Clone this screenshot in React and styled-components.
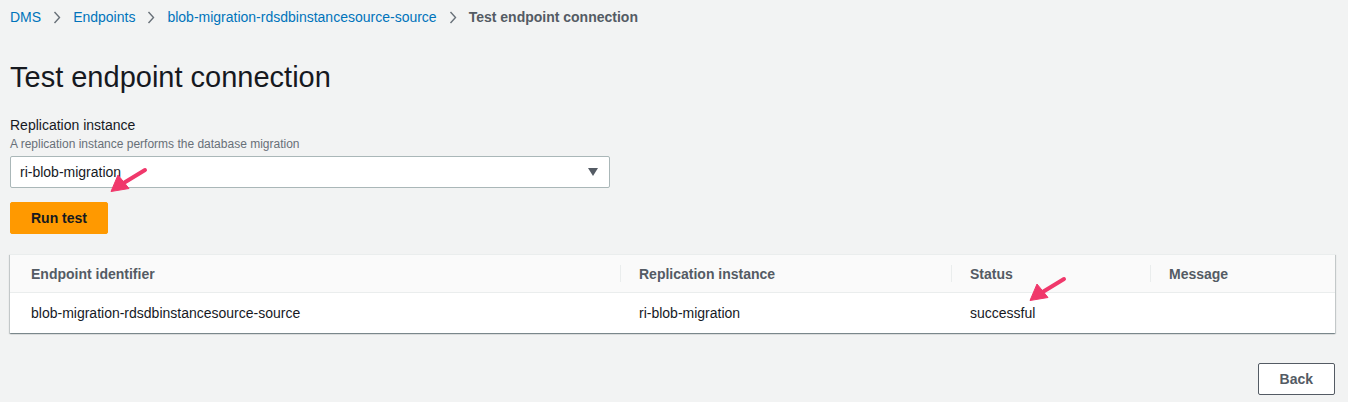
import React from "react";
import styled, { createGlobalStyle } from "styled-components";

const Global = createGlobalStyle`
  html, body { margin: 0; padding: 0; background: #f2f3f3; }
  body { font-family: "Liberation Sans", Arial, sans-serif; color: #16191f; }
`;

const Page = styled.div`
  position: relative;
  width: 1348px;
  height: 402px;
  box-sizing: border-box;
  padding: 7px 13px 0 10px;
  display: flex;
  flex-direction: column;
  overflow: hidden;
`;

const Crumbs = styled.nav`
  display: flex;
  align-items: center;
  height: 20px;
  font-size: 14px;
  line-height: 20px;
`;

const CrumbLink = styled.a`
  color: #0073bb;
  text-decoration: none;
`;

const CrumbCurrent = styled.span`
  color: #545b64;
  font-weight: bold;
`;

const Sep = styled.span`
  display: inline-flex;
  width: 32px;
  justify-content: center;
  align-items: center;
`;

const Title = styled.h1`
  margin: 32px 0 0;
  font-size: 29px;
  line-height: 36px;
  font-weight: normal;
  color: #16191f;
`;

const Label = styled.div`
  margin-top: 20px;
  font-size: 14px;
  line-height: 20px;
  color: #16191f;
`;

const Description = styled.div`
  margin-top: 1px;
  font-size: 12px;
  line-height: 16px;
  color: #687078;
`;

const Select = styled.div`
  margin-top: 4px;
  width: 600px;
  height: 32px;
  box-sizing: border-box;
  border: 1px solid #aab7b8;
  border-radius: 2px;
  background: #fff;
  display: flex;
  align-items: center;
  justify-content: space-between;
  padding: 0 9px 0 9px;
  font-size: 14px;
  color: #16191f;
`;

const Caret = styled.span`
  width: 0;
  height: 0;
  border-left: 5px solid transparent;
  border-right: 5px solid transparent;
  border-top: 8px solid #545b64;
  margin-right: 2px;
`;

const Button = styled.button`
  margin-top: ${(p) => p.$mt || 0}px;
  align-self: ${(p) => (p.$right ? "flex-end" : "flex-start")};
  height: 32px;
  box-sizing: border-box;
  padding: 0 ${(p) => p.$px || 20}px;
  font-family: inherit;
  font-size: 14px;
  font-weight: bold;
  border-radius: 2px;
  cursor: pointer;
  background: ${(p) => (p.$primary ? "#ff9900" : "#ffffff")};
  border: 1px solid ${(p) => (p.$primary ? "#ff9900" : "#545b64")};
  color: ${(p) => (p.$primary ? "#16191f" : "#545b64")};
`;

const Table = styled.div`
  margin-top: 20px;
  background: #fff;
  box-shadow: 0 1px 1px 0 rgba(0, 28, 36, 0.3), 1px 1px 1px 0 rgba(0, 28, 36, 0.15),
    -1px 1px 1px 0 rgba(0, 28, 36, 0.15);
  border-top: 1px solid #eaeded;
`;

const Row = styled.div`
  display: grid;
  grid-template-columns: 610px 331px 199px 1fr;
  height: ${(p) => (p.$head ? 37 : 40)}px;
  background: ${(p) => (p.$head ? "#fafafa" : "#fff")};
  border-bottom: ${(p) => (p.$head ? "1px solid #eaeded" : "none")};
`;

const Cell = styled.div`
  position: relative;
  display: flex;
  align-items: center;
  padding-left: ${(p) => (p.$first ? 21 : 19)}px;
  font-size: 14px;
  font-weight: ${(p) => (p.$head ? "bold" : "normal")};
  color: ${(p) => (p.$head ? "#545b64" : "#16191f")};
  ${(p) =>
    p.$head && !p.$first
      ? `&::before { content: ""; position: absolute; left: 0; top: 10px; bottom: 10px; width: 1px; background: #eaeded; }`
      : ""}
`;

const ArrowSvg = styled.svg`
  position: absolute;
  left: ${(p) => p.$x}px;
  top: ${(p) => p.$y}px;
  overflow: visible;
`;

function Chevron() {
  return (
    <svg width="8" height="13" viewBox="0 0 8 13">
      <polyline points="1.5,1 6.5,6.5 1.5,12" fill="none" stroke="#687078" strokeWidth="1.4" />
    </svg>
  );
}

function Arrow({ x, y }) {
  // tail at top-right, tip at bottom-left
  return (
    <ArrowSvg $x={x} $y={y} width="36" height="24" viewBox="0 0 36 24">
      <line x1="34" y1="2" x2="11" y2="16" stroke="#f0386b" strokeWidth="4" strokeLinecap="round" />
      <polygon points="0,23.5 7,7 18,20.5" fill="#f0386b" strokeLinejoin="round" stroke="#f0386b" strokeWidth="1" />
    </ArrowSvg>
  );
}

export default function App() {
  return (
    <>
      <Global />
      <Page>
        <Crumbs>
          <CrumbLink href="#">DMS</CrumbLink>
          <Sep><Chevron /></Sep>
          <CrumbLink href="#">Endpoints</CrumbLink>
          <Sep><Chevron /></Sep>
          <CrumbLink href="#">blob-migration-rdsdbinstancesource-source</CrumbLink>
          <Sep><Chevron /></Sep>
          <CrumbCurrent>Test endpoint connection</CrumbCurrent>
        </Crumbs>
        <Title>Test endpoint connection</Title>
        <Label>Replication instance</Label>
        <Description>A replication instance performs the database migration</Description>
        <Select>
          <span>ri-blob-migration</span>
          <Caret />
        </Select>
        <Button $primary $mt={14}>Run test</Button>
        <Table>
          <Row $head>
            <Cell $head $first>Endpoint identifier</Cell>
            <Cell $head>Replication instance</Cell>
            <Cell $head>Status</Cell>
            <Cell $head>Message</Cell>
          </Row>
          <Row>
            <Cell $first>blob-migration-rdsdbinstancesource-source</Cell>
            <Cell>ri-blob-migration</Cell>
            <Cell>successful</Cell>
            <Cell></Cell>
          </Row>
        </Table>
        <Button $right $mt={30} $px={21}>Back</Button>
        <Arrow x={111} y={168} />
        <Arrow x={1030} y={277} />
      </Page>
    </>
  );
}
